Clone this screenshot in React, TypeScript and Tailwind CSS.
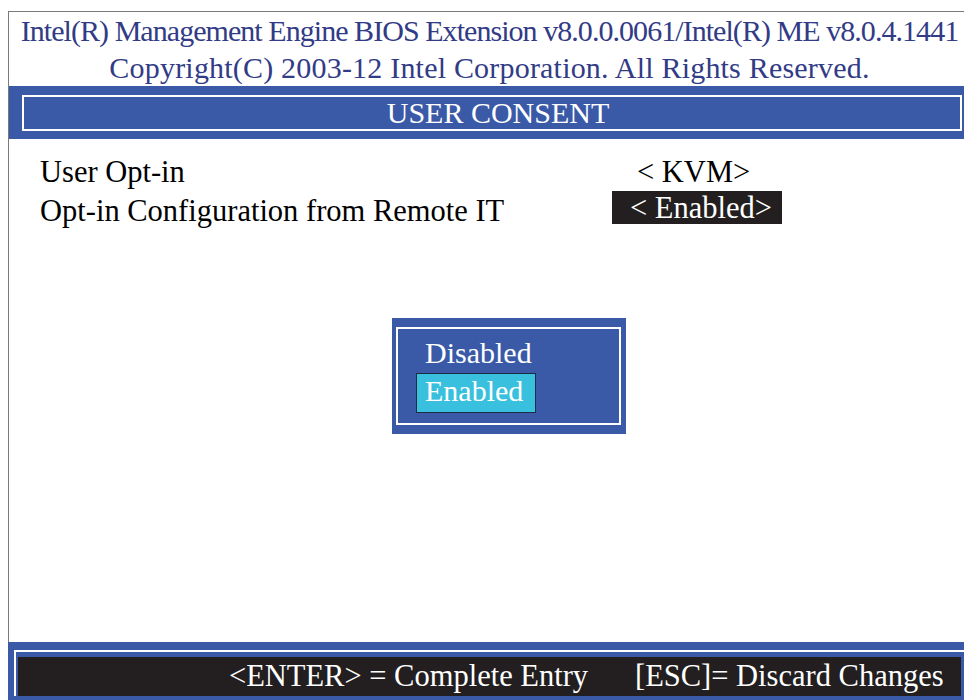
import React from "react";

export default function App() {
  const serif = { fontFamily: '"Liberation Serif", "Times New Roman", serif' };
  return (
    <div
      className="w-[964px] h-[700px] bg-white flex flex-col overflow-hidden"
      style={serif}
    >
      {/* main framed area */}
      <div className="ml-[8px] mt-[11px] flex-1 border-l border-t border-[#7a7a7a] flex flex-col">
        {/* header */}
        <div className="h-[74px] flex flex-col items-center pl-[6px] text-[#323b86] text-[30px]">
          <div className="h-[37px] leading-[37px] whitespace-nowrap tracking-[-0.95px]">
            Intel(R) Management Engine BIOS Extension v8.0.0.0061/Intel(R) ME v8.0.4.1441
          </div>
          <div className="h-[37px] leading-[37px] whitespace-nowrap tracking-[0.2px]">
            Copyright(C) 2003-12 Intel Corporation. All Rights Reserved.
          </div>
        </div>
        {/* title band */}
        <div className="h-[53px] bg-[#3a5aa8] pt-[9px] pl-[13px] pr-[2px] pb-[8px]">
          <div className="h-full border-2 border-white flex items-center justify-center pl-[12px] text-white text-[30px] leading-none">
            USER CONSENT
          </div>
        </div>
        {/* content */}
        <div className="mt-[15px] pl-[31px] text-black text-[30.5px]">
          <div className="h-[38px] flex items-center">
            <div className="w-[572px]">User Opt-in</div>
            <div className="w-[170px] pl-[25px] whitespace-pre">{"< KVM>"}</div>
          </div>
          <div className="h-[38px] flex items-start">
            <div className="w-[572px] leading-[38px]">Opt-in Configuration from Remote IT</div>
            <div className="w-[170px] h-[33px] mt-[-1px] bg-[#231f20] text-white pl-[18px] leading-[34px] whitespace-pre">
              {"< Enabled>"}
            </div>
          </div>
        </div>
        {/* popup */}
        <div className="ml-[383px] mt-[88px] w-[234px] h-[116px] bg-[#3a5aa8] pt-[9px] pl-[4px] pr-[5px] pb-[9px]">
          <div className="h-full border-2 border-white pl-[18px] pt-[6px] text-white text-[30px]">
            <div className="w-[120px] h-[38px] pl-[9px] leading-[36px]">Disabled</div>
            <div className="w-[120px] h-[40px] pl-[8px] bg-[#38c0de] border border-[#1f2a44] leading-[34px]">
              Enabled
            </div>
          </div>
        </div>
        <div className="flex-1" />
      </div>
      {/* footer */}
      <div className="ml-[8px] h-[58px] bg-[#3a5aa8] pt-[8px] pl-[6px]">
        <div className="h-[46px] border-t-2 border-l-2 border-white pt-[5px] pl-[2px] pr-[3px]">
          <div className="h-[39px] bg-[#231f20] text-white text-[30.5px] flex items-center whitespace-pre">
            <div className="w-[617px] pl-[211px]">{"<ENTER> = Complete Entry"}</div>
            <div>{"[ESC]= Discard Changes"}</div>
          </div>
        </div>
      </div>
    </div>
  );
}
